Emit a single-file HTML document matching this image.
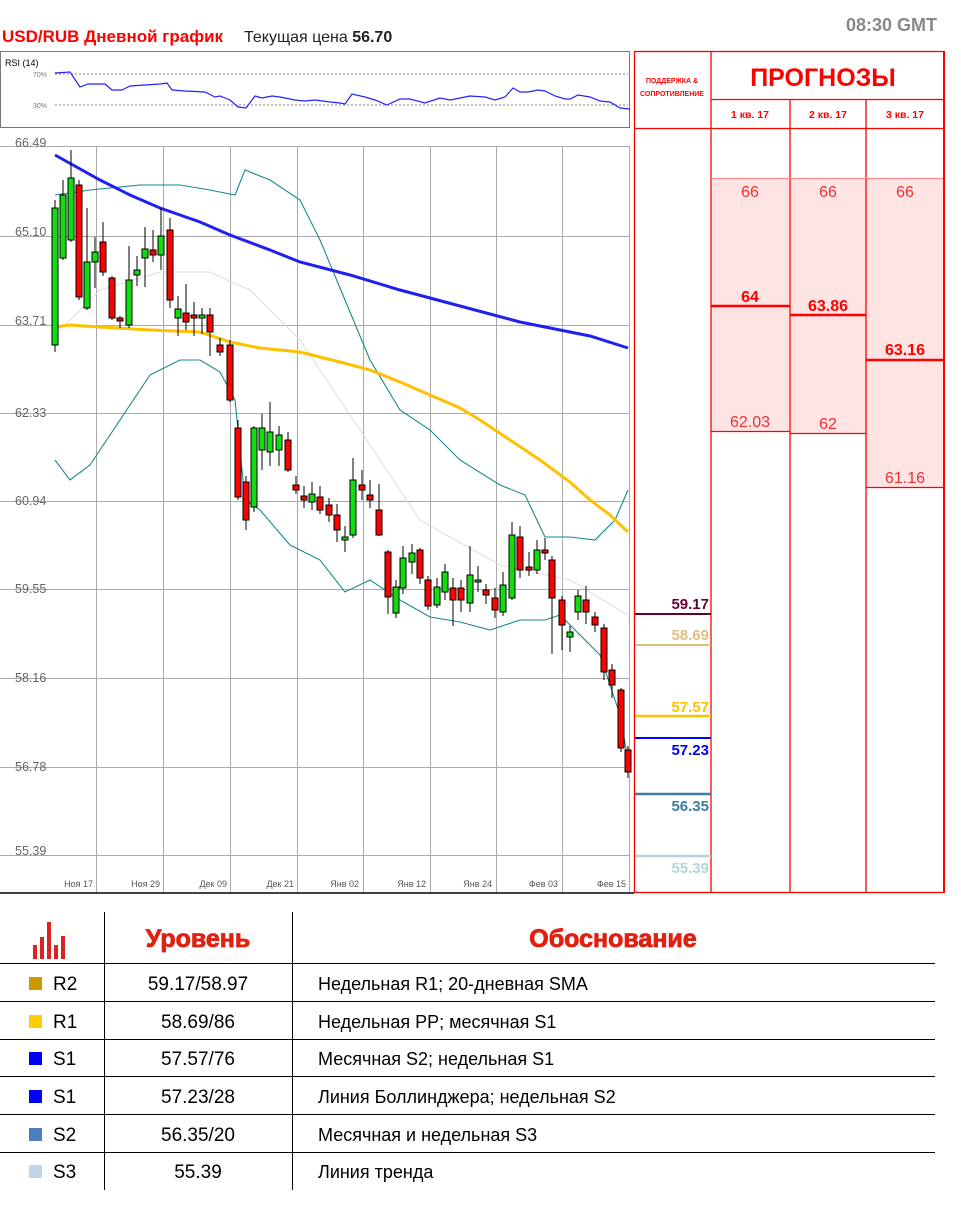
<!DOCTYPE html>
<html><head><meta charset="utf-8"><style>
html,body{margin:0;padding:0;background:#fff;}
svg{display:block;}
text{font-family:"Liberation Sans","DejaVu Sans",sans-serif;}
</style></head><body>
<svg width="961" height="1213" viewBox="0 0 961 1213" xmlns="http://www.w3.org/2000/svg">
<!-- header -->
<text x="2" y="42" font-size="17" font-weight="bold" fill="#ff0000">USD/RUB Дневной график</text>
<text x="244" y="42" font-size="16" fill="#222">Текущая цена <tspan font-weight="bold">56.70</tspan></text>
<text x="937" y="31" font-size="18" font-weight="bold" fill="#888" text-anchor="end">08:30 GMT</text>

<!-- RSI box -->
<rect x="0.5" y="51.5" width="629" height="76" fill="#fff" stroke="#777" stroke-width="1"/>
<text x="5" y="66" font-size="9" fill="#000">RSI (14)</text>
<text x="33" y="77" font-size="7" fill="#777">70%</text>
<text x="33" y="108" font-size="7" fill="#777">30%</text>
<line x1="55" y1="74" x2="628" y2="74" stroke="#555" stroke-dasharray="2,2" stroke-width="0.8"/>
<line x1="55" y1="105" x2="628" y2="105" stroke="#555" stroke-dasharray="2,2" stroke-width="0.8"/>
<polyline fill="none" stroke="#2222ff" stroke-width="1.2" points="55,73 70,72 80,87 88,84 105,84 112,90 122,90 130,86 145,85 160,84 167,83 172,90 185,91 205,92 215,97 220,96 230,100 238,107 246,108 255,96 262,98 272,96 280,97 295,100 305,101 315,100 330,102 340,103 345,104 352,94 365,97 375,100 387,105 400,99 410,99 425,103 440,98 450,100 470,96 485,97 495,100 505,97 513,88 520,92 528,92 538,90 545,91 555,96 565,99 570,99 578,95 590,97 600,101 610,102 620,108 630,109"/>

<!-- chart grid -->
<g stroke="#aaa" stroke-width="1">
<line x1="0" y1="146.5" x2="630" y2="146.5"/>
<line x1="0" y1="236.5" x2="630" y2="236.5"/>
<line x1="0" y1="325.5" x2="630" y2="325.5"/>
<line x1="0" y1="413.5" x2="630" y2="413.5"/>
<line x1="0" y1="501.5" x2="630" y2="501.5"/>
<line x1="0" y1="589.5" x2="630" y2="589.5"/>
<line x1="0" y1="678.5" x2="630" y2="678.5"/>
<line x1="0" y1="767.5" x2="630" y2="767.5"/>
<line x1="0" y1="855.5" x2="630" y2="855.5"/>
<line x1="96.5" y1="146" x2="96.5" y2="893"/>
<line x1="163.5" y1="146" x2="163.5" y2="893"/>
<line x1="230.5" y1="146" x2="230.5" y2="893"/>
<line x1="297.5" y1="146" x2="297.5" y2="893"/>
<line x1="363.5" y1="146" x2="363.5" y2="893"/>
<line x1="430.5" y1="146" x2="430.5" y2="893"/>
<line x1="496.5" y1="146" x2="496.5" y2="893"/>
<line x1="562.5" y1="146" x2="562.5" y2="893"/>
<line x1="629.5" y1="146" x2="629.5" y2="893"/>
</g>
<line x1="0" y1="893" x2="634" y2="893" stroke="#000" stroke-width="1.5"/>
<g font-size="12.5" fill="#666">
<text x="15" y="147">66.49</text>
<text x="15" y="236">65.10</text>
<text x="15" y="325">63.71</text>
<text x="15" y="417">62.33</text>
<text x="15" y="505">60.94</text>
<text x="15" y="593">59.55</text>
<text x="15" y="682">58.16</text>
<text x="15" y="771">56.78</text>
<text x="15" y="855">55.39</text>
</g>
<g font-size="9" fill="#555" text-anchor="end">
<text x="93" y="887">Ноя 17</text>
<text x="160" y="887">Ноя 29</text>
<text x="227" y="887">Дек 09</text>
<text x="294" y="887">Дек 21</text>
<text x="359" y="887">Янв 02</text>
<text x="426" y="887">Янв 12</text>
<text x="492" y="887">Янв 24</text>
<text x="558" y="887">Фев 03</text>
<text x="626" y="887">Фев 15</text>
</g>

<!-- indicator lines -->
<polyline fill="none" stroke="#ddd" stroke-width="1" points="55,335 100,290 160,272 210,272 250,290 300,340 360,430 420,520 500,565 570,580 628,615"/>
<polyline fill="none" stroke="#1a8a8a" stroke-width="1.1" points="55,195 90,190 140,185 180,185 210,190 235,195 245,170 270,180 300,200 320,240 345,300 370,360 400,410 430,430 460,460 500,485 525,495 545,537 570,537 595,540 615,520 628,490"/>
<polyline fill="none" stroke="#1a8a8a" stroke-width="1.1" points="55,460 70,480 90,465 120,420 150,375 180,360 200,360 220,372 235,400 245,500 260,510 290,545 320,560 345,592 370,580 400,600 430,617 460,622 490,630 520,620 545,620 560,615 575,630 600,655 620,715 628,760"/>
<polyline fill="none" stroke="#ffc000" stroke-width="3" points="55,327 70,325 100,327 150,330 200,332 230,342 260,348 300,352 340,362 370,370 400,382 430,395 460,408 480,420 510,440 540,460 570,482 590,500 610,515 628,532"/>
<polyline fill="none" stroke="#2020ee" stroke-width="3" points="55,155 100,180 130,195 160,208 200,222 230,235 270,250 300,262 350,275 400,290 460,306 520,322 560,330 590,336 628,348"/>

<!-- candles -->
<g stroke="#000" stroke-width="1">
<line x1="55" y1="200" x2="55" y2="352"/><rect x="52" y="208" width="6" height="137" fill="#11dd11"/>
<line x1="63" y1="180" x2="63" y2="260"/><rect x="60" y="195" width="6" height="63" fill="#11dd11"/>
<line x1="71" y1="150" x2="71" y2="242"/><rect x="68" y="178" width="6" height="62" fill="#11dd11"/>
<line x1="79" y1="180" x2="79" y2="300"/><rect x="76" y="185" width="6" height="112" fill="#ff0000"/>
<line x1="87" y1="208" x2="87" y2="310"/><rect x="84" y="262" width="6" height="46" fill="#11dd11"/>
<line x1="95" y1="237" x2="95" y2="288"/><rect x="92" y="252" width="6" height="10" fill="#11dd11"/>
<line x1="103" y1="222" x2="103" y2="276"/><rect x="100" y="242" width="6" height="30" fill="#ff0000"/>
<line x1="112" y1="276" x2="112" y2="320"/><rect x="109" y="278" width="6" height="40" fill="#ff0000"/>
<line x1="120" y1="316" x2="120" y2="328"/><rect x="117" y="318" width="6" height="3" fill="#ff0000"/>
<line x1="129" y1="246" x2="129" y2="328"/><rect x="126" y="280" width="6" height="45" fill="#11dd11"/>
<line x1="137" y1="256" x2="137" y2="286"/><rect x="134" y="270" width="6" height="5" fill="#11dd11"/>
<line x1="145" y1="227" x2="145" y2="287"/><rect x="142" y="249" width="6" height="9" fill="#11dd11"/>
<line x1="153" y1="230" x2="153" y2="262"/><rect x="150" y="250" width="6" height="5" fill="#ff0000"/>
<line x1="161" y1="208" x2="161" y2="270"/><rect x="158" y="236" width="6" height="19" fill="#11dd11"/>
<line x1="170" y1="218" x2="170" y2="308"/><rect x="167" y="230" width="6" height="70" fill="#ff0000"/>
<line x1="178" y1="296" x2="178" y2="336"/><rect x="175" y="309" width="6" height="9" fill="#11dd11"/>
<line x1="186" y1="284" x2="186" y2="330"/><rect x="183" y="313" width="6" height="9" fill="#ff0000"/>
<line x1="194" y1="302" x2="194" y2="336"/><rect x="191" y="315" width="6" height="3" fill="#ff0000"/>
<line x1="202" y1="308" x2="202" y2="334"/><rect x="199" y="315" width="6" height="3" fill="#11dd11"/>
<line x1="210" y1="308" x2="210" y2="356"/><rect x="207" y="315" width="6" height="17" fill="#ff0000"/>
<line x1="220" y1="338" x2="220" y2="356"/><rect x="217" y="345" width="6" height="7" fill="#ff0000"/>
<line x1="230" y1="340" x2="230" y2="402"/><rect x="227" y="345" width="6" height="55" fill="#ff0000"/>
<line x1="238" y1="420" x2="238" y2="500"/><rect x="235" y="428" width="6" height="69" fill="#ff0000"/>
<line x1="246" y1="476" x2="246" y2="530"/><rect x="243" y="482" width="6" height="38" fill="#ff0000"/>
<line x1="254" y1="426" x2="254" y2="512"/><rect x="251" y="428" width="6" height="79" fill="#11dd11"/>
<line x1="262" y1="414" x2="262" y2="470"/><rect x="259" y="428" width="6" height="22" fill="#11dd11"/>
<line x1="270" y1="402" x2="270" y2="466"/><rect x="267" y="432" width="6" height="20" fill="#11dd11"/>
<line x1="279" y1="426" x2="279" y2="466"/><rect x="276" y="435" width="6" height="15" fill="#11dd11"/>
<line x1="288" y1="432" x2="288" y2="472"/><rect x="285" y="440" width="6" height="30" fill="#ff0000"/>
<line x1="296" y1="476" x2="296" y2="494"/><rect x="293" y="485" width="6" height="5" fill="#ff0000"/>
<line x1="304" y1="486" x2="304" y2="508"/><rect x="301" y="496" width="6" height="4" fill="#ff0000"/>
<line x1="312" y1="482" x2="312" y2="510"/><rect x="309" y="494" width="6" height="8" fill="#11dd11"/>
<line x1="320" y1="486" x2="320" y2="514"/><rect x="317" y="497" width="6" height="13" fill="#ff0000"/>
<line x1="329" y1="498" x2="329" y2="522"/><rect x="326" y="505" width="6" height="10" fill="#ff0000"/>
<line x1="337" y1="504" x2="337" y2="542"/><rect x="334" y="515" width="6" height="15" fill="#ff0000"/>
<line x1="345" y1="526" x2="345" y2="552"/><rect x="342" y="537" width="6" height="3" fill="#11dd11"/>
<line x1="353" y1="458" x2="353" y2="538"/><rect x="350" y="480" width="6" height="55" fill="#11dd11"/>
<line x1="362" y1="470" x2="362" y2="500"/><rect x="359" y="485" width="6" height="5" fill="#ff0000"/>
<line x1="370" y1="480" x2="370" y2="508"/><rect x="367" y="495" width="6" height="5" fill="#ff0000"/>
<line x1="379" y1="484" x2="379" y2="536"/><rect x="376" y="510" width="6" height="25" fill="#ff0000"/>
<line x1="388" y1="550" x2="388" y2="614"/><rect x="385" y="552" width="6" height="45" fill="#ff0000"/>
<line x1="396" y1="580" x2="396" y2="618"/><rect x="393" y="587" width="6" height="26" fill="#11dd11"/>
<line x1="403" y1="546" x2="403" y2="594"/><rect x="400" y="558" width="6" height="30" fill="#11dd11"/>
<line x1="412" y1="544" x2="412" y2="574"/><rect x="409" y="553" width="6" height="9" fill="#11dd11"/>
<line x1="420" y1="548" x2="420" y2="584"/><rect x="417" y="550" width="6" height="28" fill="#ff0000"/>
<line x1="428" y1="576" x2="428" y2="610"/><rect x="425" y="580" width="6" height="26" fill="#ff0000"/>
<line x1="437" y1="578" x2="437" y2="608"/><rect x="434" y="587" width="6" height="18" fill="#11dd11"/>
<line x1="445" y1="564" x2="445" y2="600"/><rect x="442" y="572" width="6" height="20" fill="#11dd11"/>
<line x1="453" y1="578" x2="453" y2="626"/><rect x="450" y="588" width="6" height="12" fill="#ff0000"/>
<line x1="461" y1="580" x2="461" y2="612"/><rect x="458" y="588" width="6" height="12" fill="#ff0000"/>
<line x1="470" y1="546" x2="470" y2="612"/><rect x="467" y="575" width="6" height="28" fill="#11dd11"/>
<line x1="478" y1="566" x2="478" y2="592"/><rect x="475" y="580" width="6" height="2" fill="#11dd11"/>
<line x1="486" y1="584" x2="486" y2="604"/><rect x="483" y="590" width="6" height="5" fill="#ff0000"/>
<line x1="495" y1="588" x2="495" y2="618"/><rect x="492" y="598" width="6" height="12" fill="#ff0000"/>
<line x1="503" y1="572" x2="503" y2="616"/><rect x="500" y="585" width="6" height="27" fill="#11dd11"/>
<line x1="512" y1="522" x2="512" y2="600"/><rect x="509" y="535" width="6" height="63" fill="#11dd11"/>
<line x1="520" y1="526" x2="520" y2="578"/><rect x="517" y="537" width="6" height="33" fill="#ff0000"/>
<line x1="529" y1="552" x2="529" y2="576"/><rect x="526" y="567" width="6" height="3" fill="#ff0000"/>
<line x1="537" y1="540" x2="537" y2="574"/><rect x="534" y="550" width="6" height="20" fill="#11dd11"/>
<line x1="545" y1="538" x2="545" y2="560"/><rect x="542" y="550" width="6" height="3" fill="#ff0000"/>
<line x1="552" y1="556" x2="552" y2="654"/><rect x="549" y="560" width="6" height="38" fill="#ff0000"/>
<line x1="562" y1="596" x2="562" y2="650"/><rect x="559" y="600" width="6" height="25" fill="#ff0000"/>
<line x1="570" y1="626" x2="570" y2="652"/><rect x="567" y="632" width="6" height="5" fill="#11dd11"/>
<line x1="578" y1="590" x2="578" y2="620"/><rect x="575" y="596" width="6" height="16" fill="#11dd11"/>
<line x1="586" y1="586" x2="586" y2="624"/><rect x="583" y="600" width="6" height="12" fill="#ff0000"/>
<line x1="595" y1="612" x2="595" y2="632"/><rect x="592" y="617" width="6" height="8" fill="#ff0000"/>
<line x1="604" y1="624" x2="604" y2="680"/><rect x="601" y="628" width="6" height="44" fill="#ff0000"/>
<line x1="612" y1="664" x2="612" y2="698"/><rect x="609" y="670" width="6" height="15" fill="#ff0000"/>
<line x1="621" y1="688" x2="621" y2="752"/><rect x="618" y="690" width="6" height="58" fill="#ff0000"/>
<line x1="628" y1="746" x2="628" y2="778"/><rect x="625" y="750" width="6" height="22" fill="#ff0000"/>
</g>

<!-- right panel -->
<rect x="711" y="178" width="78" height="253" fill="#ffe4e4"/>
<rect x="790" y="178" width="76" height="255" fill="#ffe4e4"/>
<rect x="866" y="178" width="78" height="309" fill="#ffe4e4"/>
<g stroke="#ff0000" stroke-width="1.3" fill="none">
<rect x="634.5" y="51.5" width="309.5" height="841"/>
<line x1="711" y1="51" x2="711" y2="893"/>
<line x1="790" y1="99" x2="790" y2="893"/>
<line x1="866" y1="99" x2="866" y2="893"/>
<line x1="711" y1="99.5" x2="944" y2="99.5"/>
<line x1="634" y1="128.5" x2="944" y2="128.5"/>
<line x1="711" y1="178.5" x2="944" y2="178.5" stroke="#ff8888"/>
<line x1="711" y1="431.5" x2="790" y2="431.5"/>
<line x1="790" y1="433.5" x2="866" y2="433.5"/>
<line x1="866" y1="487.5" x2="944" y2="487.5"/>
</g>
<line x1="711" y1="306" x2="790" y2="306" stroke="#ff0000" stroke-width="2.5"/>
<line x1="790" y1="315" x2="866" y2="315" stroke="#ff0000" stroke-width="2.5"/>
<line x1="866" y1="360" x2="944" y2="360" stroke="#ff0000" stroke-width="2.5"/>
<line x1="944" y1="51" x2="944" y2="893" stroke="#ff0000" stroke-width="2"/>
<g fill="#ff0000" text-anchor="middle">
<text x="672" y="83" font-size="7" font-weight="bold">ПОДДЕРЖКА &amp;</text>
<text x="672" y="96" font-size="7" font-weight="bold">СОПРОТИВЛЕНИЕ</text>
<text x="823" y="86" font-size="25" font-weight="bold">ПРОГНОЗЫ</text>
<text x="750" y="118" font-size="10.5" font-weight="bold">1 кв. 17</text>
<text x="828" y="118" font-size="10.5" font-weight="bold">2 кв. 17</text>
<text x="905" y="118" font-size="10.5" font-weight="bold">3 кв. 17</text>
<g font-size="16" fill="#f03030">
<text x="750" y="197">66</text>
<text x="828" y="197">66</text>
<text x="905" y="197">66</text>
<text x="750" y="427">62.03</text>
<text x="828" y="429">62</text>
<text x="905" y="483">61.16</text>
</g>
<g font-size="16" font-weight="bold">
<text x="750" y="302">64</text>
<text x="828" y="311">63.86</text>
<text x="905" y="355">63.16</text>
</g>
</g>
<!-- S/R lines -->
<line x1="635" y1="614" x2="711" y2="614" stroke="#660033" stroke-width="2"/>
<line x1="635" y1="645" x2="711" y2="645" stroke="#e0c080" stroke-width="2"/>
<line x1="635" y1="716" x2="711" y2="716" stroke="#ffc000" stroke-width="2.5"/>
<line x1="635" y1="738" x2="711" y2="738" stroke="#0000ff" stroke-width="2"/>
<line x1="635" y1="794" x2="711" y2="794" stroke="#3a7ea6" stroke-width="2.5"/>
<line x1="635" y1="856" x2="711" y2="856" stroke="#b0d6d8" stroke-width="2.5"/>
<g font-size="15" font-weight="bold" text-anchor="end">
<text x="709" y="609" fill="#660033">59.17</text>
<text x="709" y="640" fill="#e0c080">58.69</text>
<text x="709" y="712" fill="#ffc000">57.57</text>
<text x="709" y="755" fill="#0000ff">57.23</text>
<text x="709" y="811" fill="#3a7ea6">56.35</text>
<text x="709" y="873" fill="#b0d6d8">55.39</text>
</g>

<!-- bottom table -->
<g stroke="#000" stroke-width="1">
<line x1="104.5" y1="912" x2="104.5" y2="1190"/>
<line x1="292.5" y1="912" x2="292.5" y2="1190"/>
<line x1="0" y1="963.5" x2="935" y2="963.5"/>
<line x1="0" y1="1001.5" x2="935" y2="1001.5"/>
<line x1="0" y1="1039.5" x2="935" y2="1039.5"/>
<line x1="0" y1="1076.5" x2="935" y2="1076.5"/>
<line x1="0" y1="1114.5" x2="935" y2="1114.5"/>
<line x1="0" y1="1152.5" x2="935" y2="1152.5"/>
</g>
<!-- bar icon -->
<g fill="#dd2222">
<rect x="33" y="945" width="4" height="14"/>
<rect x="40" y="937" width="4" height="22"/>
<rect x="47" y="922" width="4" height="37"/>
<rect x="54" y="945" width="4" height="14"/>
<rect x="61" y="936" width="4" height="23"/>
</g>
<text x="198" y="947" font-size="25" font-weight="bold" fill="#e02010" text-anchor="middle" stroke="#e02010" stroke-width="0.8">Уровень</text>
<text x="613" y="947" font-size="25" font-weight="bold" fill="#e02010" text-anchor="middle" stroke="#e02010" stroke-width="0.8">Обоснование</text>
<rect x="29" y="977" width="13" height="13" fill="#cc9900"/>
<rect x="29" y="1015" width="13" height="13" fill="#ffcc00"/>
<rect x="29" y="1052" width="13" height="13" fill="#0000ff"/>
<rect x="29" y="1090" width="13" height="13" fill="#0000ff"/>
<rect x="29" y="1128" width="13" height="13" fill="#4a7fbf"/>
<rect x="29" y="1165" width="13" height="13" fill="#c0d4ea"/>
<g font-size="19" fill="#000">
<text x="53" y="990">R2</text>
<text x="53" y="1028">R1</text>
<text x="53" y="1065">S1</text>
<text x="53" y="1103">S1</text>
<text x="53" y="1141">S2</text>
<text x="53" y="1178">S3</text>
<g text-anchor="middle">
<text x="198" y="990">59.17/58.97</text>
<text x="198" y="1028">58.69/86</text>
<text x="198" y="1065">57.57/76</text>
<text x="198" y="1103">57.23/28</text>
<text x="198" y="1141">56.35/20</text>
<text x="198" y="1178">55.39</text>
</g>
<g font-size="18">
<text x="318" y="990">Недельная R1; 20-дневная SMA</text>
<text x="318" y="1028">Недельная PP; месячная  S1</text>
<text x="318" y="1065">Месячная S2; недельная S1</text>
<text x="318" y="1103">Линия Боллинджера; недельная S2</text>
<text x="318" y="1141">Месячная  и недельная S3</text>
<text x="318" y="1178">Линия тренда</text>
</g>
</g>
</svg>
</body></html>
